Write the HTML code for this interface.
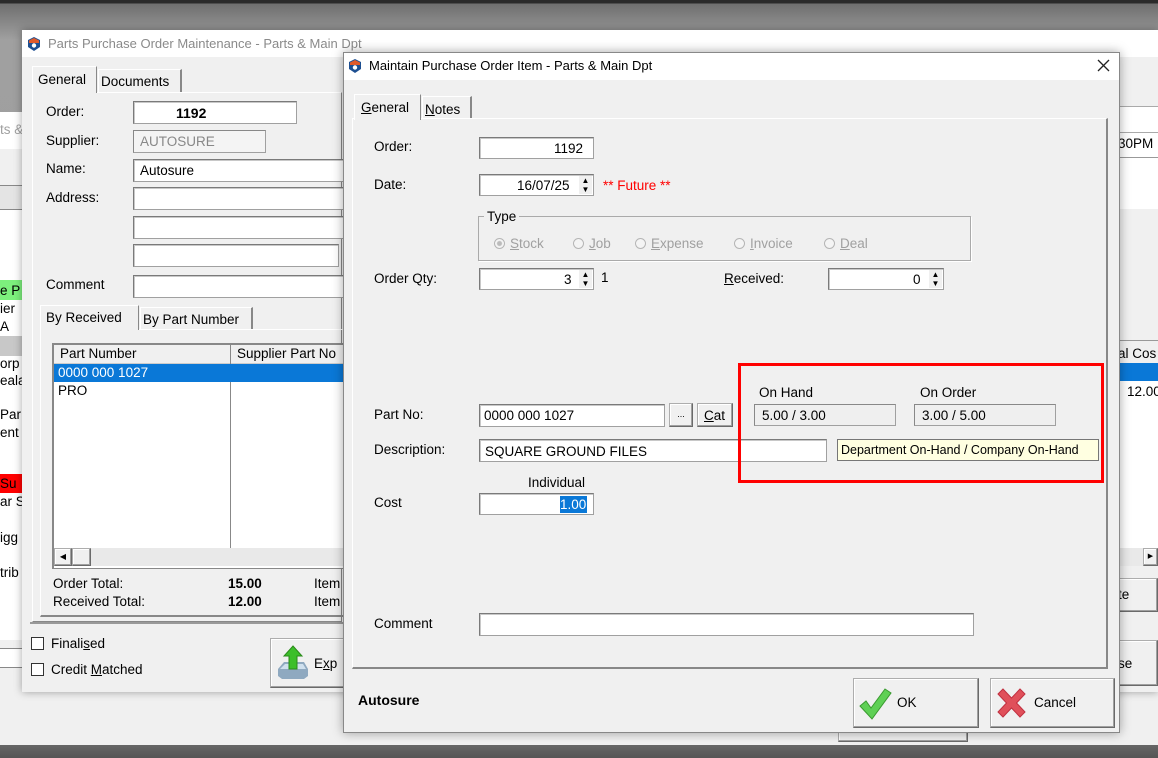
<!DOCTYPE html>
<html><head><meta charset="utf-8">
<style>
*{box-sizing:border-box;margin:0;padding:0}
body{width:1158px;height:758px;overflow:hidden;position:relative;font-family:"Liberation Sans",sans-serif;font-size:13.5px;color:#000;background:linear-gradient(#2a2a2a 0,#2a2a2a 3px,#6f6f6f 4px,#a0a0a0 40px,#9a9a9a 700px,#666 745px,#555 758px)}
.a{position:absolute}
.t{position:absolute;white-space:nowrap}
.inp{position:absolute;background:#fff;border:1px solid #a0a0a0;border-top-color:#7a7a7a;border-left-color:#7a7a7a;box-shadow:inset 1px 1px 0 #c8c8c8}
.ro{position:absolute;background:#efefef;border:1px solid #a0a0a0;border-top-color:#888;border-left-color:#888}
.btn{position:absolute;background:#f0f0f0;border:1px solid #adadad;border-right-color:#6a6a6a;border-bottom-color:#6a6a6a;box-shadow:inset -1px -1px 0 #a0a0a0, inset 1px 1px 0 #fff}
.spin{position:absolute;right:1px;top:1px;width:13px;bottom:1px;background:#f0f0f0;font-size:8px;line-height:9px;text-align:center}
.g{color:#a0a0a0}
.rad{display:inline-block;width:11px;height:11px;border-radius:50%;border:1px solid #b5b5b5;background:#f4f4f4;vertical-align:-1px;margin-right:5px}
u{text-decoration:underline}
</style></head><body>

<!-- background window -->
<div class="a" style="left:0;top:112px;width:1158px;height:633px;background:#f0f0f0"></div>
<div class="a" style="left:0;top:112px;width:22px;height:37px;background:#fff"></div>
<div class="t g" style="left:0;top:122px">ts &amp;</div>
<div class="a" style="left:0;top:185px;width:22px;height:25px;background:#e4e4e4;border-top:1px solid #888;border-bottom:1px solid #888"></div>
<div class="a" style="left:0;top:210px;width:22px;height:430px;background:#fff"></div>
<div class="a" style="left:0;top:280px;width:22px;height:20px;background:#7df07d"></div>
<div class="t" style="left:0;top:283px">e P</div>
<div class="t" style="left:0;top:301px">ier</div>
<div class="t" style="left:0;top:319px">A</div>
<div class="a" style="left:0;top:336px;width:22px;height:20px;background:#c8c8c8"></div>
<div class="t" style="left:0;top:356px">orp</div>
<div class="t" style="left:0;top:373px">eala</div>
<div class="t" style="left:0;top:407px">Par</div>
<div class="t" style="left:0;top:425px">ent</div>
<div class="a" style="left:0;top:474px;width:22px;height:19px;background:#f00"></div>
<div class="t" style="left:0;top:476px">Su</div>
<div class="t" style="left:0;top:494px">ar S</div>
<div class="t" style="left:0;top:530px">igg</div>
<div class="t" style="left:0;top:565px">trib</div>
<div class="a" style="left:0;top:648px;width:22px;height:20px;background:#fff;border-top:1px solid #888;border-bottom:1px solid #888"></div>

<!-- Parts Purchase window -->
<div class="a" style="left:22px;top:30px;width:1136px;height:662px;background:#f0f0f0;box-shadow:0 0 8px rgba(0,0,0,.35)"></div>
<div class="a" style="left:22px;top:30px;width:1136px;height:27px;background:#fff"></div>
<svg class="a" style="left:28px;top:37px" width="12" height="14" viewBox="0 0 12 14"><path d="M6 0L12 3V10L6 14L0 10V3Z" fill="#1d4f91"/><path d="M6 1L11 3.5V6H1V3.5Z" fill="#e05a2a"/><circle cx="6" cy="8.5" r="2.2" fill="#fff"/></svg>
<div class="t" style="left:48px;top:36px;color:#8a8a8a;font-size:13px">Parts Purchase Order Maintenance - Parts &amp; Main Dpt</div>
<!-- tabs -->
<div class="a" style="left:32px;top:92px;width:310px;height:530px;border:1px solid #fff;border-right-color:#888;border-bottom-color:#888"></div>
<div class="a" style="left:32px;top:66px;width:65px;height:27px;background:#f0f0f0;border:1px solid #fff;border-bottom:none;border-right:1px solid #888"></div>
<div class="t" style="left:38px;top:72px">General</div>
<div class="a" style="left:98px;top:69px;width:84px;height:23px;border:1px solid #fff;border-right:2px solid #888;border-bottom:none"></div>
<div class="t" style="left:101px;top:74px">Documents</div>
<div class="t" style="left:46px;top:104px">Order:</div>
<div class="inp" style="left:133px;top:101px;width:164px;height:23px"></div>
<div class="t" style="left:176px;top:105px;font-weight:bold;font-size:14px">1192</div>
<div class="t" style="left:46px;top:133px">Supplier:</div>
<div class="ro" style="left:133px;top:130px;width:133px;height:23px;background:#f4f4f4"></div>
<div class="t g" style="left:140px;top:134px;color:#888">AUTOSURE</div>
<div class="t" style="left:46px;top:161px">Name:</div>
<div class="inp" style="left:133px;top:159px;width:215px;height:23px"></div>
<div class="t" style="left:140px;top:163px">Autosure</div>
<div class="t" style="left:46px;top:190px">Address:</div>
<div class="inp" style="left:133px;top:187px;width:215px;height:23px"></div>
<div class="inp" style="left:133px;top:216px;width:215px;height:23px"></div>
<div class="inp" style="left:133px;top:244px;width:206px;height:23px"></div>
<div class="t" style="left:46px;top:277px">Comment</div>
<div class="inp" style="left:133px;top:275px;width:215px;height:23px"></div>
<!-- inner tabs -->
<div class="a" style="left:40px;top:329px;width:310px;height:288px;border:1px solid #fff;border-bottom:2px solid #888"></div>
<div class="a" style="left:40px;top:305px;width:99px;height:25px;background:#f0f0f0;border:1px solid #fff;border-bottom:none;border-right:1px solid #888"></div>
<div class="t" style="left:46px;top:310px">By Received</div>
<div class="a" style="left:140px;top:307px;width:113px;height:22px;border:1px solid #fff;border-right:2px solid #888;border-bottom:none"></div>
<div class="t" style="left:143px;top:312px">By Part Number</div>
<div class="a" style="left:52px;top:343px;width:300px;height:226px;background:#fff;border:1px solid #888;border-top:2px solid #888;border-left:2px solid #888"></div>
<div class="a" style="left:54px;top:345px;width:298px;height:19px;background:#f0f0f0;border-bottom:1px solid #ccc"></div>
<div class="a" style="left:230px;top:345px;width:1px;height:203px;background:#888"></div>
<div class="t" style="left:60px;top:346px">Part Number</div>
<div class="t" style="left:237px;top:346px">Supplier Part No</div>
<div class="a" style="left:54px;top:364px;width:298px;height:18px;background:#0a78d7"></div>
<div class="t" style="left:58px;top:365px;color:#fff">0000 000 1027</div>
<div class="t" style="left:58px;top:383px">PRO</div>
<div class="a" style="left:54px;top:548px;width:298px;height:18px;background:#e9e9e9"></div>
<div class="btn" style="left:54px;top:548px;width:18px;height:18px;font-size:8px;line-height:16px;text-align:center">◀</div>
<div class="btn" style="left:72px;top:548px;width:19px;height:18px"></div>
<div class="t" style="left:53px;top:576px">Order Total:</div>
<div class="t" style="left:53px;top:594px">Received Total:</div>
<div class="t" style="left:228px;top:576px;font-weight:bold">15.00</div>
<div class="t" style="left:228px;top:594px;font-weight:bold">12.00</div>
<div class="t" style="left:314px;top:576px">Item</div>
<div class="t" style="left:314px;top:594px">Item</div>
<div class="a" style="left:30px;top:622px;width:320px;height:2px;background:#999"></div>
<div class="a" style="left:31px;top:637px;width:13px;height:13px;background:#fff;border:1px solid #333"></div>
<div class="t" style="left:51px;top:636px">Finali<u>s</u>ed</div>
<div class="a" style="left:31px;top:663px;width:13px;height:13px;background:#fff;border:1px solid #333"></div>
<div class="t" style="left:51px;top:662px">Credit <u>M</u>atched</div>
<div class="btn" style="left:270px;top:638px;width:80px;height:50px"></div>
<svg class="a" style="left:276px;top:645px" width="34" height="36" viewBox="0 0 34 36"><path d="M2 24L8 17H28L32 24V31L28 34H6L2 31Z" fill="#8fa9c0"/><path d="M4 24L9 19H27L30 24Z" fill="#cfe0ee"/><path d="M17 1L26 11H21V24H13V11H8Z" fill="#3cbf2a" stroke="#2a8a1a"/></svg>
<div class="t" style="left:314px;top:656px">E<u>x</u>p</div>
<!-- right side of parts window -->
<div class="a" style="left:1118px;top:106px;width:40px;height:26px;background:#fff;border-top:1px solid #aaa"></div>
<div class="a" style="left:1118px;top:132px;width:40px;height:25px;background:#fff;border-top:1px solid #aaa"></div>
<div class="t" style="left:1118px;top:136px">30PM</div>
<div class="a" style="left:1118px;top:157px;width:40px;height:52px;background:#fff;border-top:1px solid #999"></div>
<div class="a" style="left:1118px;top:340px;width:40px;height:20px;background:#f0f0f0;border-top:1px solid #999"></div>
<div class="t" style="left:1118px;top:346px">al Cos</div>
<div class="a" style="left:1118px;top:363px;width:40px;height:18px;background:#0a78d7"></div>
<div class="a" style="left:1118px;top:381px;width:40px;height:167px;background:#fff"></div>
<div class="t" style="left:1127px;top:384px">12.00</div>
<div class="a" style="left:1118px;top:548px;width:40px;height:18px;background:#e9e9e9"></div>
<div class="btn" style="left:1143px;top:548px;width:15px;height:18px;font-size:7px;line-height:16px;text-align:center">▶</div>
<div class="btn" style="left:1110px;top:578px;width:48px;height:34px"></div>
<div class="t" style="left:1118px;top:587px">te</div>
<div class="btn" style="left:1110px;top:640px;width:48px;height:46px"></div>
<div class="t" style="left:1118px;top:656px">se</div>
<div class="btn" style="left:838px;top:715px;width:130px;height:27px"></div>

<!-- Dialog -->
<div class="a" style="left:343px;top:52px;width:777px;height:681px;background:#f0f0f0;border:1px solid #888;box-shadow:0 0 10px rgba(0,0,0,.35)"></div>
<div class="a" style="left:344px;top:53px;width:775px;height:27px;background:#fff"></div>
<svg class="a" style="left:349px;top:59px" width="12" height="14" viewBox="0 0 12 14"><path d="M6 0L12 3V10L6 14L0 10V3Z" fill="#1d4f91"/><path d="M6 1L11 3.5V6H1V3.5Z" fill="#e05a2a"/><circle cx="6" cy="8.5" r="2.2" fill="#fff"/></svg>
<div class="t" style="left:369px;top:58px;font-size:13px">Maintain Purchase Order Item - Parts &amp; Main Dpt</div>
<svg class="a" style="left:1097px;top:59px" width="13" height="13" viewBox="0 0 13 13"><path d="M1 1L12 12M12 1L1 12" stroke="#222" stroke-width="1.3"/></svg>
<!-- tab panel -->
<div class="a" style="left:352px;top:118px;width:756px;height:551px;border:1px solid #fff;border-right:2px solid #888;border-bottom:2px solid #888"></div>
<div class="a" style="left:354px;top:94px;width:67px;height:26px;background:#f0f0f0;border:1px solid #fff;border-bottom:none;border-right:1px solid #888"></div>
<div class="t" style="left:361px;top:100px"><u>G</u>eneral</div>
<div class="a" style="left:422px;top:96px;width:50px;height:22px;border:1px solid #fff;border-right:2px solid #888;border-bottom:none"></div>
<div class="t" style="left:425px;top:102px"><u>N</u>otes</div>

<div class="t" style="left:374px;top:139px">Order:</div>
<div class="inp" style="left:479px;top:137px;width:115px;height:22px"></div>
<div class="t" style="left:554px;top:141px">1192</div>
<div class="t" style="left:374px;top:177px">Date:</div>
<div class="inp" style="left:479px;top:174px;width:115px;height:22px"><div class="spin">▲<br>▼</div></div>
<div class="t" style="left:517px;top:178px">16/07/25</div>
<div class="t" style="left:603px;top:178px;color:#f00">** Future **</div>
<div class="a" style="left:478px;top:216px;width:493px;height:45px;border:1px solid #aaa;box-shadow:1px 1px 0 #fff"></div>
<div class="t" style="left:484px;top:209px;background:#f0f0f0;padding:0 3px">Type</div>
<div class="t g" style="left:494px;top:236px"><span class="rad" style="background:radial-gradient(#bbb 0 2px,#f4f4f4 3px)"></span><u>S</u>tock</div>
<div class="t g" style="left:573px;top:236px"><span class="rad"></span><u>J</u>ob</div>
<div class="t g" style="left:635px;top:236px"><span class="rad"></span><u>E</u>xpense</div>
<div class="t g" style="left:734px;top:236px"><span class="rad"></span><u>I</u>nvoice</div>
<div class="t g" style="left:824px;top:236px"><span class="rad"></span><u>D</u>eal</div>
<div class="t" style="left:374px;top:271px">Order Qty:</div>
<div class="inp" style="left:479px;top:268px;width:115px;height:22px"><div class="spin">▲<br>▼</div></div>
<div class="t" style="left:564px;top:272px">3</div>
<div class="t" style="left:601px;top:270px">1</div>
<div class="t" style="left:724px;top:271px"><u>R</u>eceived:</div>
<div class="inp" style="left:828px;top:268px;width:116px;height:22px"><div class="spin">▲<br>▼</div></div>
<div class="t" style="left:913px;top:272px">0</div>

<div class="t" style="left:374px;top:407px">Part No:</div>
<div class="inp" style="left:479px;top:404px;width:186px;height:23px"></div>
<div class="t" style="left:484px;top:408px">0000 000 1027</div>
<div class="btn" style="left:669px;top:403px;width:24px;height:24px;font-size:9px;text-align:center;line-height:20px">...</div>
<div class="btn" style="left:697px;top:403px;width:36px;height:24px"></div>
<div class="t" style="left:704px;top:408px"><u>C</u>at</div>
<div class="t" style="left:374px;top:442px">Description:</div>
<div class="inp" style="left:479px;top:439px;width:348px;height:23px"></div>
<div class="t" style="left:485px;top:444px">SQUARE GROUND FILES</div>
<div class="t" style="left:528px;top:475px">Individual</div>
<div class="t" style="left:374px;top:495px">Cost</div>
<div class="inp" style="left:479px;top:493px;width:115px;height:22px"></div>
<div class="a" style="left:560px;top:496px;width:27px;height:17px;background:#0a78d7"></div>
<div class="t" style="left:560px;top:497px;color:#fff">1.00</div>
<div class="t" style="left:374px;top:616px">Comment</div>
<div class="inp" style="left:479px;top:613px;width:495px;height:23px"></div>

<!-- on hand -->
<div class="t" style="left:759px;top:385px">On Hand</div>
<div class="ro" style="left:754px;top:404px;width:142px;height:22px"></div>
<div class="t" style="left:762px;top:408px">5.00 / 3.00</div>
<div class="t" style="left:920px;top:385px">On Order</div>
<div class="ro" style="left:914px;top:404px;width:142px;height:22px"></div>
<div class="t" style="left:922px;top:408px">3.00 / 5.00</div>
<div class="a" style="left:837px;top:439px;width:262px;height:22px;background:#ffffe1;border:1px solid #767676"></div>
<div class="t" style="left:841px;top:443px;font-size:12.5px">Department On-Hand / Company On-Hand</div>
<div class="a" style="left:738px;top:363px;width:366px;height:120px;border:3px solid #f00"></div>

<div class="t" style="left:358px;top:692px;font-weight:bold;font-size:14px">Autosure</div>
<div class="btn" style="left:853px;top:678px;width:126px;height:50px"></div>
<svg class="a" style="left:858px;top:687px" width="34" height="34" viewBox="0 0 34 34"><path d="M2 19L8 14L13 21L27 2L33 6L14 32Z" fill="#5fd055" stroke="#3a9a30" stroke-width="1"/></svg>
<div class="t" style="left:897px;top:695px">OK</div>
<div class="btn" style="left:990px;top:678px;width:125px;height:50px"></div>
<svg class="a" style="left:996px;top:688px" width="31" height="30" viewBox="0 0 31 30"><path d="M2 6L7 1L15.5 10L24 1L29 6L20.5 15L29 24L24 29L15.5 20L7 29L2 24L10.5 15Z" fill="#e0505a" stroke="#c03040" stroke-width="1"/></svg>
<div class="t" style="left:1034px;top:695px">Cancel</div>
</body></html>
